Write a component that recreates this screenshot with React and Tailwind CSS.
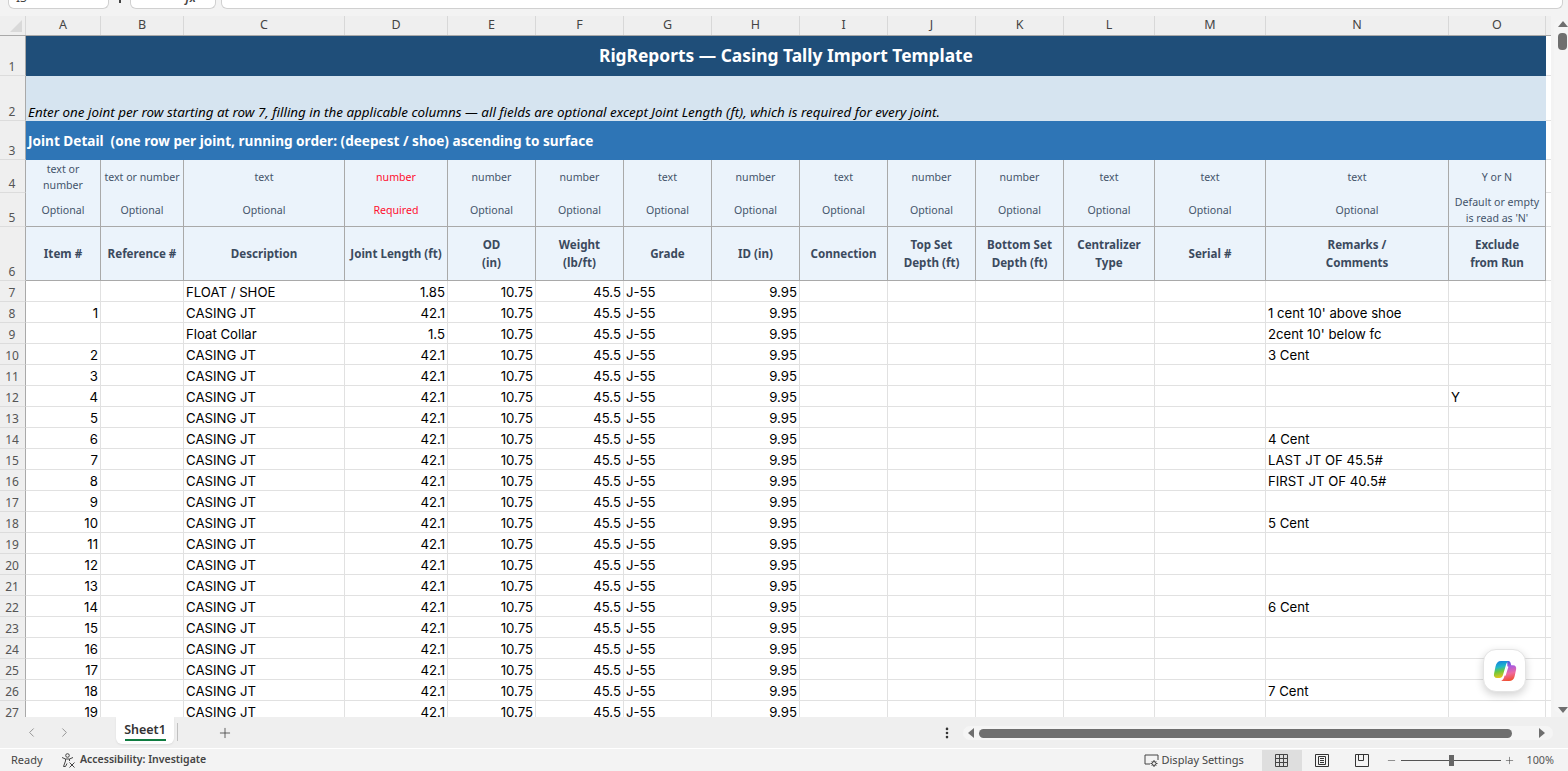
import React from 'react';
import { ChevronLeft, ChevronRight, Plus, EllipsisVertical, Minus } from 'lucide-react';

const GRID = 'grid grid-cols-[26px_75px_83px_161px_103px_88px_88px_88px_88px_88px_88px_88px_91px_111px_183px_97px_5px]';
const HEAD_FONT = 'font-["Noto_Sans","Open_Sans",sans-serif]';

const columns = ['A', 'B', 'C', 'D', 'E', 'F', 'G', 'H', 'I', 'J', 'K', 'L', 'M', 'N', 'O'];

const types = ['text or number', 'text or number', 'text', 'number', 'number', 'number', 'text', 'number', 'text', 'number', 'number', 'text', 'text', 'text', 'Y or N'];
const needs = ['Optional', 'Optional', 'Optional', 'Required', 'Optional', 'Optional', 'Optional', 'Optional', 'Optional', 'Optional', 'Optional', 'Optional', 'Optional', 'Optional', "Default or empty is read as 'N'"];
const titles = ['Item #', 'Reference #', 'Description', 'Joint Length (ft)', 'OD\n(in)', 'Weight\n(lb/ft)', 'Grade', 'ID (in)', 'Connection', 'Top Set\nDepth (ft)', 'Bottom Set\nDepth (ft)', 'Centralizer\nType', 'Serial #', 'Remarks /\nComments', 'Exclude\nfrom Run'];

const joints = [
  { item: '', desc: 'FLOAT / SHOE', len: '1.85' },
  { item: '1', desc: 'CASING JT', len: '42.1', note: "1 cent 10' above shoe" },
  { item: '', desc: 'Float Collar', len: '1.5', note: "2cent 10' below fc" },
  { item: '2', desc: 'CASING JT', len: '42.1', note: '3 Cent' },
  { item: '3', desc: 'CASING JT', len: '42.1' },
  { item: '4', desc: 'CASING JT', len: '42.1', ex: 'Y' },
  { item: '5', desc: 'CASING JT', len: '42.1' },
  { item: '6', desc: 'CASING JT', len: '42.1', note: '4 Cent' },
  { item: '7', desc: 'CASING JT', len: '42.1', note: 'LAST JT OF 45.5#' },
  { item: '8', desc: 'CASING JT', len: '42.1', note: 'FIRST JT OF 40.5#' },
  { item: '9', desc: 'CASING JT', len: '42.1' },
  { item: '10', desc: 'CASING JT', len: '42.1', note: '5 Cent' },
  { item: '11', desc: 'CASING JT', len: '42.1' },
  { item: '12', desc: 'CASING JT', len: '42.1' },
  { item: '13', desc: 'CASING JT', len: '42.1' },
  { item: '14', desc: 'CASING JT', len: '42.1', note: '6 Cent' },
  { item: '15', desc: 'CASING JT', len: '42.1' },
  { item: '16', desc: 'CASING JT', len: '42.1' },
  { item: '17', desc: 'CASING JT', len: '42.1' },
  { item: '18', desc: 'CASING JT', len: '42.1', note: '7 Cent' },
  { item: '19', desc: 'CASING JT', len: '42.1' },
];

const RowNum = ({ n }) => (
  <div className={`${HEAD_FONT} flex items-end justify-center bg-[#efefef] border-r border-b border-r-[#a9a9a9] border-b-[#dcdcdc] text-[12px] leading-[17px] text-[#555] pr-[1px]`}>
    {n}
  </div>
);

const Tail = () => <div className="bg-white border-b border-b-[#e1e1e1]" />;

const Cell = ({ right, children }) => (
  <div className={`border-r border-b border-[#e1e1e1] bg-white px-[2px] whitespace-nowrap flex items-end leading-[18px] ${right ? 'justify-end' : ''}`}>
    {children}
  </div>
);

const DataRow = ({ n, row }) => (
  <div className={`${GRID} h-[21px] font-["Inter",sans-serif] text-[13.2px] text-black`}>
    <RowNum n={n} />
    <Cell right>{row.item}</Cell>
    <Cell />
    <Cell>{row.desc}</Cell>
    <Cell right>{row.len}</Cell>
    <Cell right>10.75</Cell>
    <Cell right>45.5</Cell>
    <Cell>J-55</Cell>
    <Cell right>9.95</Cell>
    <Cell />
    <Cell />
    <Cell />
    <Cell />
    <Cell />
    <Cell>{row.note}</Cell>
    <Cell>{row.ex}</Cell>
    <Tail />
  </div>
);

const CopilotIcon = () => (
  <svg width="24" height="24" viewBox="0 0 24 24">
    <defs>
      <linearGradient id="cpLeft" x1="0.3" y1="0" x2="0.5" y2="1">
        <stop offset="0" stopColor="#1380e0" />
        <stop offset="0.35" stopColor="#20b8c8" />
        <stop offset="0.6" stopColor="#6cc83e" />
        <stop offset="1" stopColor="#f5c518" />
      </linearGradient>
      <linearGradient id="cpRight" x1="0.3" y1="0" x2="0.5" y2="1">
        <stop offset="0" stopColor="#2a62dc" />
        <stop offset="0.3" stopColor="#a85ae0" />
        <stop offset="0.65" stopColor="#ef6aa0" />
        <stop offset="1" stopColor="#f0502e" />
      </linearGradient>
    </defs>
    <path d="M8 2h8.500c-1.800.4-2.800 1.700-3.400 3.600L10 16c-.6 2-1.700 3-3.500 3H4c-2.300 0-3.500-1.700-3-4L2.500 7.500C3.200 4 5 2 8 2z" fill="url(#cpLeft)" />
    <path d="M14.500 2.200c1.900-.4 3 .8 3.400 2.800l.3 1.300h1.800c2.500 0 3.600 1.800 3.100 4.200L21.700 17c-.7 3.300-2.500 5-5.700 5H7.500c1.800-.4 2.900-1.700 3.500-3.600L14 8c.4-1.300.5-2.200.300-3.200-.1-1-.2-1.800.2-2.600z" fill="url(#cpRight)" />
    <path d="M13.600 8.200c.5-1.300 1.900-1 1.600.4l-2.400 7.400c-.5 1.300-1.900 1-1.600-.4z" fill="#fff" />
  </svg>
);

const App = () => (
  <div className={`h-screen w-full overflow-hidden flex flex-col bg-[#f3f3f3] ${HEAD_FONT}`}>
    {/* Formula bar, mostly scrolled off */}
    <div className="h-4 shrink-0 flex overflow-hidden pl-2 pr-[5px] text-[12px] text-[#444]">
      <div className="w-[101px] h-[9px] bg-white border-b border-x border-[#d0d0d0] rounded-b-md overflow-hidden pl-[7px]">
        <span className="block leading-none -mt-[8px]">I3</span>
      </div>
      <div className="w-[21px] flex justify-center">
        <div className="w-[2px] h-[3px] bg-[#444]" />
      </div>
      <div className="w-[86px] h-[9px] bg-white border-b border-x border-[#d0d0d0] rounded-b-md overflow-hidden flex justify-end pr-[19px]">
        <span className="block leading-none -mt-[8px] italic font-semibold">fx</span>
      </div>
      <div className="ml-[5px] flex-1 h-[9px] bg-white border-b border-x border-[#d0d0d0] rounded-b-md" />
    </div>

    <div className="flex-1 min-h-0 flex">
      <div className="flex-1 min-w-0 flex flex-col">
        {/* Column letters */}
        <div className={`${GRID} h-5 shrink-0 bg-[#efefef] border-b border-[#a9a9a9] text-[12.5px] text-[#444]`}>
          <div className="relative border-r border-[#d8d8d8]">
            <div className="absolute right-[3px] bottom-[3px] w-0 h-0 border-l-[12px] border-l-transparent border-b-[12px] border-b-[#d9d9d9]" />
          </div>
          {columns.map(c => (
            <div key={c} className="flex items-center justify-center border-r border-[#d8d8d8]">{c}</div>
          ))}
        </div>

        {/* Sheet */}
        <div className="relative flex-1 min-h-0 overflow-hidden bg-white">
          <div className={`${GRID} h-10`}>
            <RowNum n={1} />
            <div className="col-span-15 flex items-center justify-center bg-[#1f4e79] text-white font-bold text-[17.4px] pb-[2px]">
              RigReports — Casing Tally Import Template
            </div>
            <Tail />
          </div>
          <div className={`${GRID} h-[45px]`}>
            <RowNum n={2} />
            <div className="col-span-15 flex items-end bg-[#d6e4f0] text-black italic text-[13.4px] leading-[18px] pl-[2px] whitespace-nowrap">
              Enter one joint per row starting at row 7, filling in the applicable columns — all fields are optional except Joint Length (ft), which is required for every joint.
            </div>
            <Tail />
          </div>
          <div className={`${GRID} h-[39px]`}>
            <RowNum n={3} />
            <div className="col-span-15 flex items-center bg-[#2e75b6] text-white font-bold text-[13.6px] pl-[2px] pt-[1px] whitespace-pre">
              {'Joint Detail  (one row per joint, running order: (deepest / shoe) ascending to surface'}
            </div>
            <Tail />
          </div>
          <div className={`${GRID} h-[33px]`}>
            <RowNum n={4} />
            {types.map((t, i) => (
              <div key={i} className={`flex items-center justify-center text-center bg-[#ebf3fb] border-r border-[#a9a9a9] px-[2px] text-[10.6px] leading-4 ${i === 3 ? 'text-[#ff0f2f]' : 'text-[#44546a]'} ${i === 0 ? 'px-4' : ''}`}>
                {t}
              </div>
            ))}
            <Tail />
          </div>
          <div className={`${GRID} h-[34px]`}>
            <RowNum n={5} />
            {needs.map((t, i) => (
              <div key={i} className={`flex items-center justify-center text-center bg-[#ebf3fb] border-r border-b border-[#a9a9a9] text-[10.6px] leading-4 ${i === 3 ? 'text-[#ff0f2f]' : 'text-[#44546a]'} ${i === 14 ? 'px-1' : ''}`}>
                {t}
              </div>
            ))}
            <Tail />
          </div>
          <div className={`${GRID} h-[54px]`}>
            <RowNum n={6} />
            {titles.map((t, i) => (
              <div key={i} className="flex items-center justify-center text-center whitespace-pre-line bg-[#ebf3fb] border-r border-b border-[#a9a9a9] text-[#3b4a5e] font-bold text-[11.6px] leading-[18px]">
                {t}
              </div>
            ))}
            <Tail />
          </div>
          {joints.map((row, i) => <DataRow key={i} n={i + 7} row={row} />)}

          {/* Copilot button floats over the grid */}
          <div className="absolute left-[1483px] top-[613px] w-[43px] h-[43px] rounded-[13px] bg-white border border-[#e4e4e4] shadow-[0_3px_8px_rgba(0,0,0,0.18)] flex items-center justify-center">
            <CopilotIcon />
          </div>
        </div>
      </div>

      {/* Vertical scrollbar */}
      <div className="w-[17px] shrink-0 flex flex-col items-end pt-[4px] pb-[4px]">
        <div className="w-[14px] flex-1 bg-[#f5f5f5] rounded-md flex flex-col items-center pl-[3px]">
          <div className="w-0 h-0 border-x-[5px] border-x-transparent border-b-[6px] border-b-[#6f6f6f] mt-[1px]" />
          <div className="w-[9px] h-[17px] rounded-[4px] bg-[#6f6f6f] mt-[6px]" />
          <div className="flex-1" />
          <div className="w-0 h-0 border-x-[5px] border-x-transparent border-t-[6px] border-t-[#6f6f6f]" />
        </div>
      </div>
    </div>

    {/* Sheet tabs and horizontal scrollbar */}
    <div className="h-[32px] shrink-0 bg-[#efefef] border-b border-white flex items-stretch text-[#444]">
      <div className="w-[116px] flex items-center pl-[24px] gap-[18px] text-[#8f8f8f]">
        <ChevronLeft size={15} strokeWidth={1.5} />
        <ChevronRight size={15} strokeWidth={1.5} />
      </div>
      <div className="w-[58px] h-[27px] bg-white rounded-b-md flex flex-col items-center shadow-[0_1px_2px_rgba(0,0,0,0.08)]">
        <span className="text-[12.5px] font-semibold leading-[18px] mt-[4px] text-[#333]">Sheet1</span>
        <div className="w-[41px] h-[2px] bg-[#107c41]" />
      </div>
      <div className="w-px h-[18px] bg-[#c0c0c0] ml-[3px] mt-[6px]" />
      <div className="ml-[39px] flex items-center">
        <Plus size={16} strokeWidth={1.25} />
      </div>
      <div className="flex-1" />
      <div className="flex items-center mr-[9px]">
        <EllipsisVertical size={14} strokeWidth={2.5} className="text-[#333]" />
      </div>
      <div className="w-[590px] h-[14px] mt-[9px] mr-[15px] bg-[#f5f5f5] rounded-full flex items-center pl-[5px] pr-[8px]">
        <div className="w-0 h-0 border-y-[5px] border-y-transparent border-r-[6px] border-r-[#6f6f6f]" />
        <div className="flex-1 h-[9px] ml-[5px] mr-[27px] rounded-full bg-[#6f6f6f]" />
        <div className="w-0 h-0 border-y-[5px] border-y-transparent border-l-[6px] border-l-[#6f6f6f]" />
      </div>
    </div>

    {/* Status bar */}
    <div className="h-[22px] shrink-0 bg-[#f3f3f3] flex items-center text-[11px] text-[#444]">
      <span className="ml-[11px] w-[50px]">Ready</span>
      <svg width="15" height="15" viewBox="0 0 15 15" fill="none" stroke="#444" strokeWidth="1">
        <circle cx="6.500" cy="2.500" r="1.800" />
        <path d="M1 4.500l3.500 1.500h4L12 4.500M4.500 6v2L2.500 13.500h2L6 10.500M8.500 6v2" />
        <path d="M8.500 9.500l5 5M13.500 9.500l-5 5" />
      </svg>
      <span className="ml-[4px] text-[10.5px] font-semibold">Accessibility: Investigate</span>
      <div className="flex-1" />
      <svg width="17" height="15" viewBox="0 0 17 15" fill="none" stroke="#444" strokeWidth="1">
        <path d="M6 11H1V2h13v5" />
        <circle cx="10" cy="10.500" r="2" />
        <path d="M10 7v1.500M10 12.500V14M6.500 10.500H8M12 10.500h1.500M7.800 8.300l1 1M11.200 11.700l1 1M7.800 12.700l1-1M11.200 9.300l1-1" />
      </svg>
      <span className="ml-[1px] w-[90px]">Display Settings</span>
      <div className="w-10 h-[21px] bg-[#dedede] ml-[10px] flex items-center justify-center">
        <svg width="13" height="13" viewBox="0 0 13 13" fill="none" stroke="#444" strokeWidth="1">
          <path d="M.5.5h12v12H.5zM4.500.5v12M8.500.5v12M.5 4.500h12M.5 8.500h12" />
        </svg>
      </div>
      <div className="w-10 flex justify-center">
        <svg width="14" height="13" viewBox="0 0 14 13" fill="none" stroke="#333" strokeWidth="1">
          <path d="M.5.5h13v12H.5zM3.500 2.500h7v8h-7zM5 4.500h4M5 6.500h4M5 8.500h4" />
        </svg>
      </div>
      <div className="w-10 flex justify-center">
        <svg width="14" height="13" viewBox="0 0 14 13" fill="none" stroke="#333" strokeWidth="1">
          <path d="M.5.5h13v12H.5zM3.500.5v6h5V.5" />
        </svg>
      </div>
      <Minus size={11} strokeWidth={1.25} className="ml-[4px]" />
      <div className="relative w-[100px] h-px bg-[#555] ml-[4px]">
        <div className="absolute left-[48px] -top-[5px] w-[5px] h-[11px] bg-[#666]" />
      </div>
      <Plus size={11} strokeWidth={1.25} className="ml-[3px]" />
      <span className="ml-[12px] mr-[14px] text-[10.8px] text-[#555]">100%</span>
    </div>
  </div>
);

export default App;
